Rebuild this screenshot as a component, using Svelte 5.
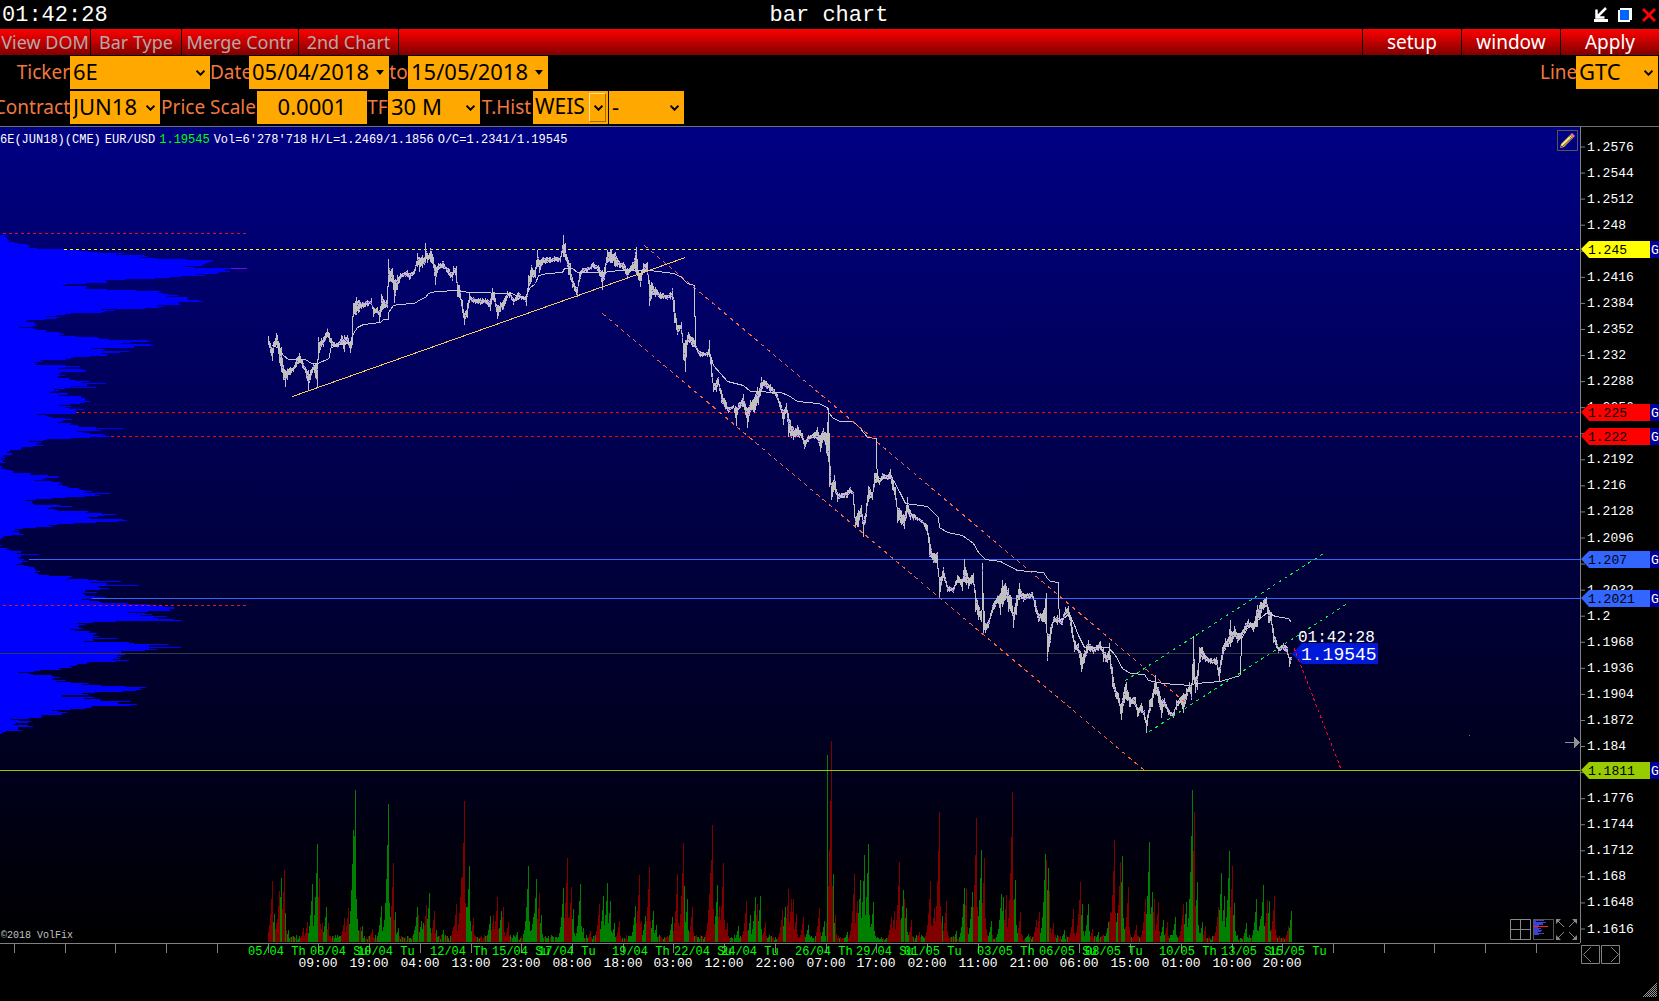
<script>
const menu=['View DOM','Bar Type','Merge Contr','2nd Chart'];
const actions=['setup','window','Apply'];

// plot space: x 0..1580, y 127..943
const TOP=127;
const H=816;
const W=1580;
const px=(x)=>(x/W*100)+'%';
const py=(y)=>((y-TOP)/H*100)+'%';
const priceY=(p)=>146.5+(1.2576-p)/0.0032*26.067;

const hidden=[1.2448,1.2224,1.2064,1.1808];
const prices=[];
for(let i=0;i<=30;i++){
    prices.push(Number((1.2576-i*0.0032).toFixed(4)));
}
const levels=[
    {p:'1.245', y:249, from:64, c:'#ffff00', dash:'3 3'},
    {p:'1.225', y:412, from:76, c:'#ff0000', dash:'3 3'},
    {p:'1.222', y:436, from:111, c:'#ff0000', dash:'3 3'},
    {p:'1.207', y:559, from:29, c:'#3366ff', dash:null},
    {p:'1.2021', y:598, from:92, c:'#3366ff', dash:null},
    {p:'1.1811', y:770, from:0, c:'#99cc00', dash:null}
];
const trends=[
    {d:'M292 396L685 257', c:'#ffc85a', dash:null},
    {d:'M644 245L1186 703', c:'#ff6644', dash:'4 4'},
    {d:'M602 313L1144 770', c:'#ff6633', dash:'4 4'},
    {d:'M1125 680L1326 551', c:'#00ff33', dash:'3 4'},
    {d:'M1149 731L1350 601', c:'#00ff33', dash:'3 4'}
];

const ticks=[];
for(let i=0;i<31;i++) ticks.push(Math.round(14+i*50.73));
const hours=['09:00','19:00','04:00','13:00','23:00','08:00','18:00','03:00','12:00','22:00','07:00','17:00','02:00','11:00','21:00','06:00','15:00','01:00','10:00','20:00'];
const days=[
    [248,'05/04 Th'],[310,'08/04 Su'],[357,'10/04 Tu'],[430,'12/04 Th'],[492,'15/04 Su'],[538,'17/04 Tu'],
    [612,'19/04 Th'],[674,'22/04 Su'],[721,'24/04 Tu'],[795,'26/04 Th'],[856,'29/04 Su'],[904,'01/05 Tu'],
    [977,'03/05 Th'],[1039,'06/05 Su'],[1085,'08/05 Tu'],[1159,'10/05 Th'],[1221,'13/05 Su'],[1269,'15/05 Tu']
];

// volume at price, one value per pixel row from y 235 down
const profile=`8 4 7 7 8 10 8 14 18 26 30 29 29 37 67 79 88 99 124 116 144 148 140 157 187 213 212 209 206 203 203 184 194 236 225 225 230 219 217 196 205 181 170 155 125 106 106 107 86 66 63 87 86 86 107 136 161 158 164 168 178 167 187 188 188 199 203 179 179 180 157 164 159 145 102 115 105 102 71 65 56 47 59 56 45 27 26 35 34 36 36 33 19 33 37 47 46 59 62 64 60 76 97 100 109 147 150 131 121 151 153 134 134 91 105 103 129 120 102 108 107 90 73 70 66 40 42 34 38 36 66 80 65 58 82 87 85 61 60 59 65 58 57 69 70 76 90 82 106 87 87 71 96 65 54 59 52 50 68 67 59 82 81 85 85 85 90 85 80 70 59 71 65 70 84 76 77 76 75 37 46 48 52 65 72 63 62 57 71 70 78 79 96 124 96 101 77 84 90 103 106 110 90 71 47 43 29 41 36 37 43 33 22 21 21 10 9 7 12 12 4 3 5 1 5 2 3 5 0 0 0 2 2 1 6 11 14 13 31 30 48 59 58 46 43 35 52 60 62 58 63 66 69 79 80 85 92 85 110 95 100 85 66 52 36 25 33 32 33 34 61 72 51 48 55 58 88 87 102 116 104 98 88 91 123 127 118 96 74 58 49 52 36 23 15 19 13 20 19 23 12 3 4 1 1 0 0 0 0 0 2 0 0 9 6 11 22 21 16 39 21 21 18 19 24 22 28 22 21 16 24 29 34 35 35 36 40 35 38 39 49 72 70 67 88 97 121 90 107 107 139 98 100 109 100 85 85 97 83 84 86 95 105 92 82 89 99 102 128 147 157 164 174 174 169 171 148 128 145 152 140 167 153 158 174 182 116 93 77 85 79 78 79 83 71 75 90 89 97 95 93 99 93 118 93 94 84 129 134 169 149 149 181 149 157 145 121 122 122 125 117 121 117 120 113 129 116 88 87 78 76 70 72 59 61 40 34 19 30 33 52 53 60 54 52 66 56 71 89 82 101 126 146 140 142 136 123 95 82 88 62 62 94 84 100 101 131 118 118 137 131 92 91 86 71 52 59 67 62 62 42 42 41 29 11 19 31 28 16 14 28 33 18 18 18 22 6 3 2`.split(' ').map(Number);
const profilePath='M0 235'+profile.map((w)=>`H${w}v1`).join('')+'H0Z';

// x high low, in thirds of a pixel from the chunk's corner
const chunks=[
    {x:240,y:220,t:`85 348 375,90 370 400,95 385 422,100 365 400,107 340 375,112 345 385,117 370 430,124 380 455,130 435 480,134 450 500,140 445 480,150 440 465,160 440 455,168 415 440,177 400 430,185 420 445,195 440 460,203 450 512,210 450 480,218 430 450,224 430 475,230 430 500,233 350 420,243 355 380,250 350 380,260 325 350,267 340 365,274 355 385,290 370 385,303 345 375,313 345 395,322 345 370,330 370 398,336 320 375,340 250 290,348 230 285,356 240 275,370 245 265,392 235 255,400 260 290,410 260 280,418 270 305,424 222 275,432 240 265,440 235 265,443 118 200,448 145 185,455 145 190,462 180 250,470 165 210,480 160 178,500 150 170,508 160 180,522 148 162,530 100 140,537 110 155,545 105 145,553 110 135,556 70 130,562 100 130,570 83 125,580 110 145,585 135 195,595 130 150,610 122 148,625 145 165,635 155 182,640 138 165,648 138 175,652 185 230,658 195 235,665 240 280,673 280 315,680 250 295,688 218 250,700 230 250,720 235 255,735 235 250,750 235 272,755 203 240,762 215 245,772 255 298,780 245 275,790 240 270,800 212 235,810 215 232,820 235 255,835 215 240,850 228 240,858 228 257,864 165 210,872 135 185,880 150 175,885 140 175,892 90 140,898 120 160,906 110 135,930 110 130,960 108 125,966 75 100,970 45 110,975 70 120,983 120 165,990 130 180,996 170 205,1003 190 212,1010 200 232,1016 155 185,1025 145 160,1040 140 155,1060 125 145,1075 135 155,1085 150 210,1092 140 180,1100 90 130,1112 88 130,1125 97 140,1140 130 145,1150 125 150,1162 145 175,1175 125 150,1187 82 165,1195 150 180,1200 160 200,1210 130 160,1220 125 155,1228 180 258,1236 190 225,1245 200 230,1260 215 238,1280 225 240,1297 205 240,1303 240 310,1312 315 345,1322 305 330,1330 370 420,1334 360 455,1340 345 375,1345 335 365,1355 350 380,1365 355 385,1372 385 400,1379 395 415`},
    {x:660,y:240,t:`120 333 350,125 335 350,140 335 350,147 300 350,153 360 410,160 430 455,168 420 455,175 410 435,182 450 490,195 480 510,205 500 520,220 495 505,228 500 558,235 490 510,250 462 500,260 505 565,270 480 515,282 470 520,290 440 490,295 455 495,303 412 455,312 420 440,330 432 455,347 455 475,360 485 510,368 510 555,378 488 520,385 520 590,400 560 600,410 555 590,425 580 600,433 600 627,445 585 605,460 580 595,472 562 600,480 585 635,490 565 600,498 580 640,503 505 665,508 580 740,513 730 780,521 705 750,530 755 785,545 760 775,560 750 775,570 742 760,578 755 765,585 830 865,595 810 860,602 795 830,610 840 890,618 790 830,624 738 785,635 755 780,643 700 740,650 692 725,656 720 735,665 700 720,680 705 720,690 688 715,697 710 750,705 740 780,712 800 850,722 810 855,732 825 868,740 770 820,750 810 840,765 825 840,785 840 850,800 855 885,808 890 950,815 935 960`},
    {x:900,y:500,t:`92 145 175,100 160 190,110 155 200,117 230 290,128 200 235,140 255 275,158 260 280,170 225 250,185 235 272,193 178 245,205 230 268,218 220 255,225 270 335,235 315 360,243 330 365,245 190 330,250 280 400,256 370 400,265 360 385,275 315 340,290 285 310,301 280 345,307 240 320,315 250 300,325 265 335,332 290 340,340 335 385,348 285 345,356 250 300,370 280 305,395 275 295,405 300 335,415 340 365,430 330 365,437 280 400,441 400 482,450 380 430,458 350 370,470 345 375,485 355 375,495 320 345,503 318 350,512 350 400,522 420 455,535 430 460,543 460 517,552 450 490,565 420 450,580 440 462,600 422 450,610 445 485,620 460 490,628 430 480,636 500 560,645 560 590,655 580 610,662 610 660,672 560 610,678 545 600,688 590 620,705 590 620,712 620 652,722 610 640,732 630 660,739 660 700,748 600 640,757 580 620,766 525 585,775 560 610,782 600 655,792 593 620,803 625 645,818 635 655,828 600 630,840 590 610,850 578 640,858 565 600,866 545 575,872 560 600,880 408 540,884 530 580,890 510 570,897 440 490,905 440 480,915 465 485,930 475 493,948 470 495,958 500 545,966 440 480,975 415 450,983 410 440,989 360 440,995 395 425,1003 378 410,1012 400 430,1022 395 420,1035 370 390,1045 358 385,1060 370 395,1070 315 380,1080 305 350,1090 300 330,1098 290 320,1103 320 370,1112 335 370,1118 385 430,1127 420 445,1135 440 460,1150 430 450,1162 440 460,1168 470 500,1175 460 480`}
];
const averages=[
    {x:240,y:220,t:'95 375,112 382,130 405,145 418,195 418,212 428,232 428,268 415,269 385,285 375,330 365,340 340,350 320,370 311,420 306,430 298,443 297,443 275,460 255,475 251,522 250,540 238,555 230,565 218,585 212,655 209,685 217,815 220,830 228,855 232,868 205,885 190,895 165,920 160,965 157,972 143,995 145,1010 155,1090 155,1135 149,1230 151,1300 158,1320 168,1340 190,1361 196,1361 288,1364 288,1364 375'},
    {x:660,y:240,t:'104 320,120 335,150 345,160 375,180 400,200 423,250 435,270 452,360 455,385 465,410 482,475 488,500 500,505 515,520 535,540 542,578 543,600 565,620 590,649 595,649 655,652 715,690 715,700 720,720 760,735 790,800 797,835 830,838 860,860 877,905 885,940 910,955 935,975 957'},
    {x:900,y:500,t:'255 177,300 183,350 211,430 216,440 235,450 243,475 246,475 290,478 360,490 355,505 343,520 365,535 405,553 440,625 442,645 465,665 505,690 520,732 523,745 540,790 550,870 556,885 548,960 543,1000 530,1021 525,1022 415,1040 385,1070 360,1100 337,1125 348,1165 355,1173 365'}
];
// x top colour, bars stand on 636
const spikes=[
    {x:240,t:`90 453 r,97 552 g,102 580 r,110 483 r,116 444 g,124 420 r,128 549 g,135 600 g,178 594 r,188 576 r,202 462 g,211 531 r,216 342 g,222 444 r,230 580 r,241 531 g,247 579 r,293 564 r,303 534 r,312 520 g,319 300 g,323 180 g,327 564 r,337 591 r,343 588 g,371 597 r,396 528 g,402 591 g,415 222 g,424 528 g,429 399 r,436 546 g,443 594 g,489 600 g,497 531 g,500 556 r,509 573 g,514 579 g,522 525 r,530 489 g,545 543 r,550 600 g,570 600 g,598 590 r,606 522 r,620 444 r,628 213 r,634 531 g,642 408 g,653 564 r,701 558 g,709 555 r,720 501 r,732 543 g,738 531 r,751 576 r,776 606 g,800 590 r,807 408 g,821 561 g,830 447 g,838 489 r,845 555 g,905 474 g,917 384 r,928 471 r,933 537 g,953 462 g,962 594 g,981 603 r,1006 522 r,1017 498 g,1028 459 g,1037 513 g,1048 579 g,1062 573 r,1107 528 g,1118 435 r,1124 573 r,1135 558 g,1146 411 r,1157 543 g,1166 585 g,1210 561 g,1224 432 r,1241 339 r,1245 468 g,1252 507 g,1267 531 r,1318 430 r,1322 285 r,1336 465 g,1342 528 r,1353 399 r,1364 579 r,1395 588 g,1418 513 r,1430 555 g,1443 501 g,1448 522 r,1457 498 g,1471 576 r,1518 540 r`},
    {x:780,t:`15 531 g,23 477 r,32 507 r,38 507 r,46 552 r,66 561 r,79 585 g,110 534 r,125 573 g,133 75 n,144 33 r,150 432 g,156 555 r,188 606 g,208 432 r,217 513 r,225 450 g,236 375 g,247 342 g,263 516 g,312 561 r,320 543 r,334 396 r,345 480 g,348 507 r,354 534 g,368 570 r,390 606 r,421 453 r,432 534 r,446 246 r,455 558 g,466 513 r,494 603 g,516 474 g,522 477 r,539 486 g,550 264 r,565 360 g,572 384 r,592 573 g,620 492 g,625 501 g,634 495 r,651 186 r,659 450 g,673 546 r,697 612 g,719 570 r,726 546 r,743 372 g,746 390 r,751 414 g,755 483 r,765 579 r,797 600 g,821 537 r,842 456 r,847 522 g,863 522 g,875 597 r,893 606 g,920 576 g,926 546 r,936 330 r,945 549 g,953 396 r,959 378 g,975 471 r,998 585 r,1023 507 r,1034 336 g,1043 486 g,1048 507 r,1059 516 r,1073 570 g,1084 576 r,1107 561 g,1129 522 r,1138 516 g,1149 492 r,1155 180 g,1160 246 r,1169 456 g,1183 576 g,1191 588 r,1228 531 r,1236 429 g,1244 498 g,1258 363 g,1267 408 r,1272 519 g,1306 579 g,1334 507 g,1345 567 g,1353 465 g,1365 510 r,1370 513 g,1384 498 r,1424 588 r,1432 543 g`}
];

const noise=(n)=>{
    const v=Math.sin(n*12.9898)*43758.5453;
    return v-Math.floor(v);
}
const rows=(t)=>t.split(',').map((r)=>r.split(' '));

const bars=[];
for(const c of chunks){
    const pts=rows(c.t).map(([x,a,b])=>[Math.round(c.x+x/3),c.y+a/3,c.y+b/3]);
    for(let i=0;i<pts.length-1;i++){
        const [x0,a0,b0]=pts[i];
        const [x1,a1,b1]=pts[i+1];
        for(let x=x0;x<x1;x++){
            const k=(x-x0)/(x1-x0);
            const a=a0+(a1-a0)*k;
            const b=b0+(b1-b0)*k;
            // keep the recorded extremes, roughen what lies between them
            const cut=x==x0 ? 0 : (b-a)*0.3;
            bars.push([x,Math.round(a+cut*noise(x)),Math.round(b-cut*noise(x+0.5))]);
        }
    }
}
let barPath='';
let closes='';
bars.forEach(([x,a,b],i)=>{
    const next=bars[i+1];
    let top=a;
    let bottom=Math.max(b,a+2);
    if(next && next[0]-x<=3){
        if(next[1]>bottom) bottom=next[1]+1;
        if(next[2]<top) top=next[2]-1;
    }
    barPath+=`M${x} ${top}h1V${bottom}h-1Z`;
    if(noise(x*3)>0.5) closes+=`M${x} ${Math.round(a+(b-a)*noise(x*7))}h1v1h-1Z`;
});

const avgPaths=averages.map((c)=>'M'+rows(c.t).map(([x,y])=>Math.round(c.x+x/3)+' '+Math.round(c.y+y/3)).join('L'));

const vol={};
const put=(x,h,c)=>{
    if(x<268 || x>1291) return;
    if(!vol[x] || vol[x].h<h) vol[x]={h,c};
}
for(let x=268;x<1292;x++) put(x,2+noise(x)*5,noise(x*5)>0.5?'g':'r');
for(const s of spikes){
    for(const [cx,top,c] of rows(s.t)){
        const x=Math.round(s.x+cx/2.8-0.5);
        const h=(636-top)/3;
        if(c=='n'){ put(x,h,'g'); continue; }
        put(x,h,c);
        [0.7,0.46,0.28,0.16,0.1].forEach((f,i)=>put(x-1-i,h*f,c));
        [0.28,0.15,0.08].forEach((f,i)=>put(x+1+i,h*f,c));
    }
}
const volPath=(c)=>Object.entries(vol).filter(([,v])=>v.c==c).map(([x,v])=>`M${x} 942v-${Math.max(1,Math.round(v.h))}h1V942Z`).join('');
const up=volPath('g');
const down=volPath('r');
</script>

{#snippet drop(id,value,cls)}
    <span class="drop {cls}">
        <select {id}><option>{value}</option></select>
        <svg class="chev" width="9" height="6" viewBox="0 0 9 6"><path d="M.5 .7L4.5 4.7L8.5 .7"/></svg>
    </span>
{/snippet}
{#snippet date(id,value)}
    <span class="drop date">
        <input {id} type="text" {value}>
        <svg class="tri" width="8" height="5" viewBox="0 0 8 5"><path d="M0 0h8L4 5Z"/></svg>
    </span>
{/snippet}

<div class="win">
    <header class="title">
        <time>01:42:28</time>
        <h1>bar chart</h1>
        <div class="winbtns">
            <button aria-label="minimize"><svg width="14" height="16" viewBox="0 0 14 16"><path d="M12 1L4 9M2.5 2.500V10.500H10.500" fill="none" stroke="#fff" stroke-width="2.500"/><path d="M0 12h14v3H0Z" fill="#fff"/></svg></button>
            <button aria-label="restore"><svg width="14" height="16" viewBox="0 0 14 16"><path d="M2 1H14V13H12V15H0V3H2Z" fill="#fff"/><path d="M2 3H11V13H2Z" fill="#0066ff"/></svg></button>
            <button aria-label="close"><svg width="14" height="16" viewBox="0 0 14 16"><path d="M1 2L13 14M13 2L1 14" stroke="#f00" stroke-width="3"/></svg></button>
        </div>
    </header>

    <nav class="menu">
        {#each menu as m}
            <button>{m}</button>
        {/each}
        <span class="fill"></span>
        {#each actions as a}
            <button class="act">{a}</button>
        {/each}
    </nav>

    <form class="fields">
        <div class="row">
            <label class="first" for="ticker">Ticker</label>
            {@render drop('ticker','6E','w140')}
            <label class="w38" for="from">Date</label>
            {@render date('from','05/04/2018')}
            <label class="w18" for="to">to</label>
            {@render date('to','15/05/2018')}
            <span class="fill"></span>
            <label class="line" for="line">Line</label>
            {@render drop('line','GTC','w82')}
        </div>
        <div class="row">
            <label class="first" for="contract">Contract</label>
            {@render drop('contract','JUN18','w90')}
            <label class="w96" for="scale">Price Scale</label>
            <input class="scale" id="scale" type="text" value="0.0001">
            <label class="w20" for="tf">TF</label>
            {@render drop('tf','30 M','w92')}
            <label class="w52" for="hist">T.Hist</label>
            {@render drop('hist','WEIS','w76 boxed')}
            <select class="none" aria-label="histogram mode"><option>-</option></select>
            <svg class="chev after" width="9" height="6" viewBox="0 0 9 6"><path d="M.5 .7L4.5 4.7L8.5 .7"/></svg>
        </div>
    </form>

    <main class="chart">
        <section class="plot">
            <svg class="canvas" viewBox="0 127 1580 816" preserveAspectRatio="none" shape-rendering="crispEdges">
                <path d={up} fill="#008000"/>
                <path d={down} fill="#800000"/>
                <path d={profilePath} fill="#0000ff"/>
                <rect x="0" y="653" width="1292" height="1" fill="#383840"/>
                <g transform="translate(0 .5)" fill="none">
                    {#each levels as l}
                        <path d="M{l.from} {l.y}H1580" stroke={l.c} stroke-dasharray={l.dash}/>
                    {/each}
                    <path d="M3 233H247M3 605H247" stroke="#e01030" stroke-dasharray="3 3"/>
                    <path d="M231 268H247" stroke="#8000ff"/>
                </g>
                <path d={barPath} fill="#c0c0c0"/>
                <path d={closes} fill="#8020ff"/>
                <g transform="translate(.5 .5)" fill="none">
                    {#each avgPaths as d}
                        <path {d} stroke="#c8c8d0"/>
                    {/each}
                    {#each trends as t}
                        <path d={t.d} stroke={t.c} stroke-dasharray={t.dash}/>
                    {/each}
                </g>
                <rect x="1469" y="735" width="1" height="1" fill="#c05030"/>
                <path d="M1565 742h9v-5l6 5l-6 6v-5h-9Z" fill="#909090"/>
            </svg>
            <svg class="canvas">
                <svg x={px(1292)} y={py(654)} overflow="visible">
                    <path d="M0 0L10 -11H86V10H10Z" fill="#0018d8"/>
                    <text class="clock" x="6" y="-12">01:42:28</text>
                    <text class="last" x="9" y="6">1.19545</text>
                </svg>
            </svg>
            <svg class="canvas" viewBox="0 127 1580 816" preserveAspectRatio="none" shape-rendering="crispEdges">
                <path d="M1294 648L1341 769" fill="none" stroke="#ff0022" stroke-dasharray="3 3"/>
            </svg>
            <p class="info">
                <span>6E(JUN18)(CME)</span><span>EUR/USD</span><span class="green">1.19545</span><span>Vol=6'278'718</span><span>H/L=1.2469/1.1856</span><span>O/C=1.2341/1.19545</span>
            </p>
            <button class="pencil" aria-label="draw">
                <svg width="19" height="19" viewBox="0 0 19 19"><path d="M2 17L3 13L12 4L15 7L6 16Z" fill="#e8c860"/><path d="M3 15L13 5" stroke="#fff4b0"/><path d="M12 4L14 2L17 5L15 7Z" fill="#e08080"/><path d="M11 5L14 8" stroke="#60a070"/><path d="M4 16L14 7" stroke="#705020"/><path d="M2 17L3 14L5 16Z" fill="#806040"/></svg>
            </button>
            <p class="copy">©2018 VolFix</p>
            <div class="tools">
                <button aria-label="grid"><svg width="21" height="21" viewBox="0 0 21 21"><path d="M.5 .5H20.500V20.500H.5ZM10.500 0V21M0 10.500H21" fill="none" stroke="#888"/></svg></button>
                <button aria-label="profile"><svg width="21" height="21" viewBox="0 0 21 21" shape-rendering="crispEdges"><path d="M.5 .5H20.500V20.500H.5Z" fill="none" stroke="#555"/><path d="M1 1h10v1h-8v1h10v1h-3v1h0v1h-4v1h-2v1h-3Z M1 8h4v1h3v1h-2v1h3v1h-1v1h-3v1h6v1h-5v1h-5Z" fill="#4040d0"/><path d="M1 7h14v1H1Z" fill="#f22"/></svg></button>
                <button aria-label="fit"><svg width="21" height="21" viewBox="0 0 21 21"><path d="M2 2L8 8M19 2L13 8M2 19L8 13M19 19L13 13" stroke="#888"/><path d="M0 0H5L0 5ZM21 0V5L16 0ZM0 21V16L5 21ZM21 21H16L21 16Z" fill="#888"/></svg></button>
            </div>
        </section>

        <svg class="prices">
            {#each prices as p}
                <svg y={py(priceY(p))} overflow="visible">
                    <rect x="1" width="4" height="1" fill="#808080"/>
                    {#if !hidden.includes(p)}
                        <text x="7" y="4">{p}</text>
                    {/if}
                </svg>
            {/each}
            {#each levels as l}
                <svg y={py(l.y)} overflow="visible">
                    <path d="M1 0L9 -8H70V9H9Z" fill={l.c}/>
                    <rect x="70" y="-8" width="9" height="17" fill="#0000a0"/>
                    <text class="dark" x="8" y="5">{l.p}</text>
                    <text x="71" y="5">G</text>
                </svg>
            {/each}
        </svg>

        <svg class="times">
            {#each ticks as t}
                <rect x={px(t)} width="1" height="9" fill="#808080"/>
            {/each}
            {#each days as [x,d]}
                <text class="day" x={px(x)} y="11">{d}</text>
            {/each}
            {#each hours as h,i}
                <text x={px(ticks[i+6])} y="23" text-anchor="middle">{h}</text>
            {/each}
        </svg>

        <footer class="corner">
            <div class="pager">
                <button aria-label="back"><svg width="19" height="19" viewBox="0 0 19 19"><path d="M.5 .5H18.500V18.500H.5ZM10 2L2.500 9.500L10 17" fill="none" stroke="#808080"/></svg></button>
                <button aria-label="forward"><svg width="19" height="19" viewBox="0 0 19 19"><path d="M.5 .5H18.500V18.500H.5ZM10 2L17.500 9.500L10 17" fill="none" stroke="#808080"/></svg></button>
            </div>
            <span class="grip"></span>
        </footer>
    </main>
</div>

<style>
:global(body){
    margin:0;
    background:#000;
}
.win{
    height:100vh;
    min-height:600px;
    display:flex;
    flex-direction:column;
    overflow:hidden;
    background:#000;
    color:#fff;
    font-family:'Noto Sans', sans-serif;
    font-size:19px;
}
button,input,select{
    font:inherit;
    color:inherit;
    margin:0;
    padding:0;
    border:0;
    border-radius:0;
    background:none;
    box-sizing:border-box;
}
svg{
    display:block;
}
.fill{
    flex:1;
}
.title{
    height:27px;
    display:grid;
    grid-template-columns:1fr auto 1fr;
    align-items:center;
    padding:2px 3px 0 2px;
    font-family:'Liberation Mono', monospace;
    font-size:22px;
    line-height:26px;
}
h1{
    margin:0;
    font-size:22px;
    font-weight:400;
}
.winbtns{
    display:flex;
    justify-content:flex-end;
    gap:10px;
    padding-bottom:2px;
}
.menu{
    height:26px;
    display:flex;
    background:linear-gradient(#ff0000,#800000);
}
.menu button{
    width:91px;
    color:#b4a8a8;
    font-size:18px;
    border-right:1px solid #000;
    line-height:24px;
    white-space:nowrap;
}
.menu button:nth-child(3){
    width:117px;
}
.menu button:nth-child(4){
    width:100px;
}
.menu .act{
    width:99px;
    color:#fff;
    font-size:19px;
    border-right:0;
    border-left:1px solid #000;
}
.fields{
    display:flex;
    flex-direction:column;
    gap:2px;
    padding:1px 0 2px;
}
.row{
    display:flex;
    height:33px;
}
label{
    color:#f07840;
    line-height:32px;
    white-space:nowrap;
    text-align:center;
}
.first{
    width:70px;
    display:flex;
    justify-content:flex-end;
}
.w18{width:19px;}
.w20{width:21px;}
.w38{width:39px;}
.w52{width:53px;}
.w96{width:97px;}
.line{width:36px;}
.drop{
    position:relative;
    display:flex;
    background:#ffa800;
    color:#000;
}
.drop select,.drop input,.none{
    appearance:none;
    width:100%;
    height:33px;
    padding:0 0 4px 3px;
    font-size:22px;
    color:#000;
}
.w140,.date{width:140px;}
.w90{width:90px;}
.w92{width:92px;}
.w76{width:75px;}
.w82{
    width:82px;
    margin-right:1px;
}
.scale{
    width:110px;
    background:#ffa800;
    color:#000;
    font-size:22px;
    text-align:center;
    padding-bottom:4px;
}
.none{
    width:75px;
    margin-left:1px;
    background:#ffa800;
}
.chev,.tri{
    position:absolute;
    right:5px;
    top:14px;
    pointer-events:none;
}
.after{
    position:relative;
    right:14px;
}
.chev path{
    fill:none;
    stroke:#000;
    stroke-width:2;
}
.boxed select{
    padding-left:2px;
    font-size:21px;
}
.boxed::after{
    content:'';
    position:absolute;
    right:2px;
    top:2px;
    width:15px;
    height:27px;
    border:1px solid #ffe0a0;
    border-right-color:#a06a00;
    border-bottom-color:#a06a00;
    pointer-events:none;
}
.chart{
    flex:1;
    display:grid;
    grid-template-columns:1fr 79px;
    grid-template-rows:1fr 58px;
    border-top:1px solid #707070;
    min-height:0;
}
.plot{
    position:relative;
    background:linear-gradient(#000084,#000);
    overflow:hidden;
}
.canvas{
    position:absolute;
    inset:0;
    width:100%;
    height:100%;
}
.info{
    position:relative;
    margin:0;
    display:flex;
    gap:4px;
    font:12px/26px 'Liberation Mono', monospace;
}
.green{
    color:#00ff00;
}
.copy{
    position:absolute;
    left:1px;
    bottom:1px;
    margin:0;
    color:#c0c0c0;
    font:10px/12px 'Liberation Mono', monospace;
}
.pencil{
    position:absolute;
    top:3px;
    right:2px;
    width:21px;
    height:21px;
    border:1px solid #555;
}
.tools{
    position:absolute;
    right:3px;
    bottom:3px;
    display:flex;
    gap:2px;
}
text{
    font:13px 'Liberation Mono', monospace;
    fill:#fff;
}
.clock{
    font-size:16px;
}
.last{
    font-size:18px;
}
.dark{
    fill:#000;
}
.day{
    font-size:12px;
    fill:#00ff00;
}
.prices{
    width:79px;
    height:100%;
    box-shadow:inset 1px 0 #808080;
}
.times{
    width:100%;
    height:57px;
    border-top:1px solid #808080;
}
.corner{
    display:flex;
    flex-direction:column;
    justify-content:space-between;
    padding:2px 2px 4px 1px;
}
.pager{
    display:flex;
    gap:1px;
}
.grip{
    align-self:flex-end;
    width:15px;
    height:15px;
    background:repeating-conic-gradient(#999 0 25%,#000 0 50%) 0 0/2px 2px;
    clip-path:polygon(100% 0,100% 100%,0 100%);
}
</style>
